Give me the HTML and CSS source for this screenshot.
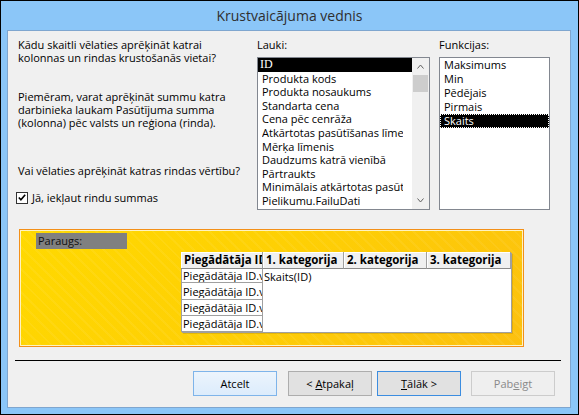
FILE: index.html
```html
<!DOCTYPE html>
<html lang="lv">
<head>
<meta charset="utf-8">
<title>Krustvaicājuma vednis</title>
<link rel="stylesheet" href="styles.css">
</head>
<body>
<div class="window">
  <div class="titlebar">Krustvaicājuma vednis</div>
  <div class="client">
    <div class="top">
      <div class="intro">
        <p class="q1">Kādu skaitli vēlaties aprēķināt katrai<br>kolonnas un rindas krustošanās vietai?</p>
        <p class="example">Piemēram, varat aprēķināt summu katra<br>darbinieka laukam Pasūtījuma summa<br>(kolonna) pēc valsts un reģiona (rinda).</p>
        <p class="q2">Vai vēlaties aprēķināt katras rindas vērtību?</p>
        <div class="check">
          <span class="box"><svg width="11" height="11" viewBox="0 0 11 11"><path d="M2 5.5 L4.3 8 L9 2.5" fill="none" stroke="#000" stroke-width="1.8"/></svg></span>
          <span class="check-label"><u>J</u>ā, iekļaut rindu summas</span>
        </div>
      </div>
      <div class="fields">
        <div class="label">Lauki:</div>
        <div class="listbox">
          <div class="items">
            <div class="item sel id"><span>ID</span></div>
            <div class="item"><span>Produkta kods</span></div>
            <div class="item"><span>Produkta nosaukums</span></div>
            <div class="item"><span>Standarta cena</span></div>
            <div class="item"><span>Cena pēc cenrāža</span></div>
            <div class="item"><span>Atkārtotas pasūtīšanas līmenis</span></div>
            <div class="item"><span>Mērķa līmenis</span></div>
            <div class="item"><span>Daudzums katrā vienībā</span></div>
            <div class="item"><span>Pārtraukts</span></div>
            <div class="item"><span>Minimālais atkārtotas pasūtīšanas daudzums</span></div>
            <div class="item"><span>Pielikumu.FailuDati</span></div>
          </div>
          <div class="scrollbar">
            <div class="arrow"><svg width="7" height="5" viewBox="0 0 7 5"><path d="M0.5 4.5 L3.5 1 L6.5 4.5" fill="none" stroke="#606060" stroke-width="1"/></svg></div>
            <div class="thumb"></div>
            <div class="track"></div>
            <div class="arrow"><svg width="7" height="5" viewBox="0 0 7 5"><path d="M0.5 0.5 L3.5 4 L6.5 0.5" fill="none" stroke="#606060" stroke-width="1"/></svg></div>
          </div>
        </div>
      </div>
      <div class="funcs">
        <div class="label">Funkcijas:</div>
        <div class="listbox">
          <div class="items">
            <div class="item f">Maksimums</div>
            <div class="item f">Min</div>
            <div class="item f">Pēdējais</div>
            <div class="item f">Pirmais</div>
            <div class="item f sel focus">Skaits</div>
          </div>
        </div>
      </div>
    </div>

    <div class="sample">
      <div class="sample-label">Paraugs:</div>
      <div class="grid">
        <div class="h">Piegādātāja ID</div>
        <div class="h">1. kategorija</div>
        <div class="h">2. kategorija</div>
        <div class="h">3. kategorija</div>
        <div class="r"><span>Piegādātāja ID.vērtība1</span></div>
        <div class="v">Skaits(ID)</div>
        <div class="r"><span>Piegādātāja ID.vērtība2</span></div>
        <div class="r"><span>Piegādātāja ID.vērtība3</span></div>
        <div class="r"><span>Piegādātāja ID.vērtība4</span></div>
      </div>
    </div>

    <div class="sep"></div>

    <div class="buttons">
      <div class="btn cancel"><span>Atcelt</span></div>
      <div class="btn back"><span>&lt; <u>A</u>tpakaļ</span></div>
      <div class="btn next"><span><u>T</u>ālāk &gt;</span></div>
      <div class="btn finish"><span>Pab<u>e</u>igt</span></div>
    </div>
  </div>
</div>
</body>
</html>
```

FILE: styles.css
```css
html, body {
  margin: 0;
  padding: 0;
  background: #ffffff;
}

.window {
  width: 579px;
  height: 415px;
  box-sizing: border-box;
  border: 1px solid #000;
  background: #8bc6f8;
  display: flex;
  flex-direction: column;
}

.titlebar {
  height: 29px;
  line-height: 29px;
  text-align: center;
  font-family: "Open Sans", "Noto Sans", sans-serif;
  font-size: 14px;
  color: #2f2f2f;
}

.client {
  flex: 1;
  margin: 0 7px 6px 6px;
  border: 1px solid #7fa6cf;
  background: #f0f0f0;
  display: flex;
  flex-direction: column;
  font-family: "Open Sans", "Noto Sans", sans-serif;
  font-size: 11px;
  line-height: 13px;
  color: #000;
}

.top {
  display: flex;
  padding: 7px 0 0 10px;
}

.intro {
  width: 239px;
}

.intro p {
  margin: 0;
}

.intro .example {
  margin-top: 26px;
}

.intro .q2 {
  margin-top: 35px;
}

.check {
  display: flex;
  align-items: center;
  margin: 14px 0 0 -2px;
  height: 13px;
}

.box {
  width: 12px;
  height: 12px;
  box-sizing: border-box;
  border: 1px solid #333;
  background: #fff;
  display: flex;
  align-items: center;
  justify-content: center;
}

.check-label {
  margin-left: 4px;
}

.fields {
  width: 173px;
}

.funcs {
  width: 111px;
  margin-left: 9px;
}

.label {
  height: 13px;
  margin-bottom: 6px;
}

.listbox {
  height: 153px;
  box-sizing: border-box;
  border: 1px solid #828790;
  background: #fff;
  display: flex;
}

.items {
  flex: 1;
  overflow: hidden;
}

.item {
  height: 13.6px;
  line-height: 13.6px;
  padding-left: 4px;
  white-space: nowrap;
}

.item span {
  display: block;
  width: 141px;
  overflow: hidden;
}

.item.f {
  height: 14px;
  line-height: 14px;
}

.item.sel {
  background: #000;
  color: #fff;
}

.item.id {
  padding-left: 2px;
  font-family: "Liberation Serif", "DejaVu Serif", serif;
  font-size: 12px;
}

.item.focus {
  outline: 1px dotted #fff;
  outline-offset: -1px;
}

.scrollbar {
  width: 17px;
  background: #f0f0f0;
  display: flex;
  flex-direction: column;
}

.arrow {
  height: 17px;
  display: flex;
  align-items: center;
  justify-content: center;
}

.thumb {
  height: 17px;
  margin: 0 1px;
  background: #cdcdcd;
}

.track {
  flex: 1;
}

.sample {
  margin: 19px 0 0 11px;
  width: 505px;
  height: 118px;
  box-sizing: border-box;
  border: 1px solid #f39019;
  box-shadow: inset 0 0 0 1px #fff3c0;
  background:
    repeating-linear-gradient(45deg, rgba(255,255,255,0) 0 6px, rgba(255,255,255,0.06) 6px 8px),
    linear-gradient(135deg, #ffd900 0%, #fed004 45%, #fcc00f 100%);
}

.sample-label {
  margin: 3px 0 0 16px;
  width: 91px;
  height: 16px;
  line-height: 16px;
  padding-left: 2px;
  box-sizing: border-box;
  background: #808080;
  color: #111;
}

.grid {
  margin: 3px 0 0 161px;
  width: 330px;
  display: grid;
  grid-template-columns: 82px 81px 83px 84px;
  grid-template-rows: 17px 14px 17px 16px 16px;
  background: #fff;
  box-shadow: 1px 1px 0 #a0a0a0, 2px 2px 0 rgba(150,110,0,0.25);
}

.h {
  box-sizing: border-box;
  background: #f0f0f0;
  border-right: 1px solid #a0a0a0;
  border-bottom: 1px solid #8a8a8a;
  box-shadow: inset 1px 1px 0 #fff;
  font-weight: bold;
  font-size: 11.5px;
  padding-left: 3px;
  line-height: 16px;
  white-space: nowrap;
  overflow: hidden;
}

.r {
  grid-column: 1;
  box-sizing: border-box;
  border-left: 1px solid #a0a0a0;
  border-right: 1px solid #a0a0a0;
  border-bottom: 1px solid #a0a0a0;
  padding-left: 1px;
  white-space: nowrap;
  overflow: hidden;
  display: flex;
  align-items: center;
}

.r span {
  min-width: 0;
  overflow: hidden;
}

.v {
  grid-column: 2;
  grid-row: 2;
  padding-left: 1px;
  display: flex;
  align-items: center;
}

.sep {
  margin: 13px 0 0 7px;
  width: 546px;
  height: 1px;
  background: #000;
}

.buttons {
  display: flex;
  margin-top: 10px;
  padding-left: 185px;
}

.btn {
  width: 84px;
  height: 25px;
  box-sizing: border-box;
  border: 1px solid #adadad;
  background: #e1e1e1;
  display: flex;
  align-items: center;
  justify-content: center;
  color: #000;
  white-space: pre;
}

.cancel {
  border-color: #7eb4ea;
  background: linear-gradient(#ecf4fc, #dcecfc);
}

.back {
  margin-left: 11px;
}

.next {
  margin-left: 5px;
  border-color: #3c8de0;
}

.finish {
  margin-left: 10px;
  border-color: #cccccc;
  background: #efefef;
  color: #8a8a8a;
}
```
